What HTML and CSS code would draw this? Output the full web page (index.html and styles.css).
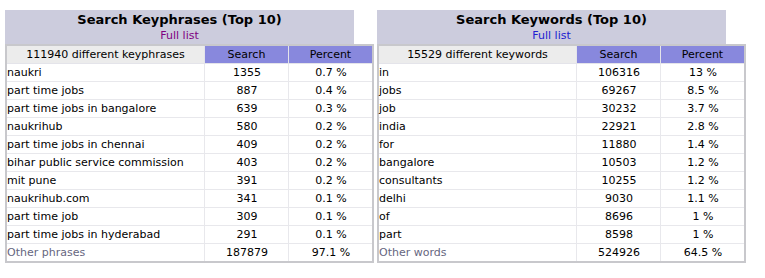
FILE: index.html
```html
<!DOCTYPE html>
<html>
<head>
<meta charset="utf-8">
<link rel="stylesheet" href="styles.css">
</head>
<body>
<div class="wrap">
  <div class="panel">
    <div class="head">
      <div class="title">Search Keyphrases (Top 10)</div>
      <a class="link visited" href="#">Full list</a>
    </div>
    <table class="data">
      <tr><th class="first">111940 different keyphrases</th><th class="col">Search</th><th class="col">Percent</th></tr>
      <tr><td>naukri</td><td>1355</td><td>0.7 %</td></tr>
      <tr><td>part time jobs</td><td>887</td><td>0.4 %</td></tr>
      <tr><td>part time jobs in bangalore</td><td>639</td><td>0.3 %</td></tr>
      <tr><td>naukrihub</td><td>580</td><td>0.2 %</td></tr>
      <tr><td>part time jobs in chennai</td><td>409</td><td>0.2 %</td></tr>
      <tr><td>bihar public service commission</td><td>403</td><td>0.2 %</td></tr>
      <tr><td>mit pune</td><td>391</td><td>0.2 %</td></tr>
      <tr><td>naukrihub.com</td><td>341</td><td>0.1 %</td></tr>
      <tr><td>part time job</td><td>309</td><td>0.1 %</td></tr>
      <tr><td>part time jobs in hyderabad</td><td>291</td><td>0.1 %</td></tr>
      <tr class="other"><td>Other phrases</td><td>187879</td><td>97.1 %</td></tr>
    </table>
  </div>
  <div class="panel">
    <div class="head">
      <div class="title">Search Keywords (Top 10)</div>
      <a class="link" href="#">Full list</a>
    </div>
    <table class="data">
      <tr><th class="first">15529 different keywords</th><th class="col">Search</th><th class="col">Percent</th></tr>
      <tr><td>in</td><td>106316</td><td>13 %</td></tr>
      <tr><td>jobs</td><td>69267</td><td>8.5 %</td></tr>
      <tr><td>job</td><td>30232</td><td>3.7 %</td></tr>
      <tr><td>india</td><td>22921</td><td>2.8 %</td></tr>
      <tr><td>for</td><td>11880</td><td>1.4 %</td></tr>
      <tr><td>bangalore</td><td>10503</td><td>1.2 %</td></tr>
      <tr><td>consultants</td><td>10255</td><td>1.2 %</td></tr>
      <tr><td>delhi</td><td>9030</td><td>1.1 %</td></tr>
      <tr><td>of</td><td>8696</td><td>1 %</td></tr>
      <tr><td>part</td><td>8598</td><td>1 %</td></tr>
      <tr class="other"><td>Other words</td><td>524926</td><td>64.5 %</td></tr>
    </table>
  </div>
</div>
</body>
</html>
```

FILE: styles.css
```css
html, body {
  margin: 0;
  padding: 0;
  background: #ffffff;
}
body {
  font-family: "DejaVu Sans", Verdana, sans-serif;
  font-size: 11px;
  color: #000000;
}
.wrap {
  display: flex;
  gap: 5px;
  padding: 10px 5px 0 5px;
}
.panel {
  width: 367px;
}
.head {
  width: 349px;
  height: 34px;
  background: #ccccdd;
  text-align: center;
  display: flex;
  flex-direction: column;
  align-items: center;
}
.title {
  font-weight: bold;
  font-size: 13px;
  line-height: 16px;
  padding-top: 2px;
}
.link {
  font-size: 11px;
  line-height: 14px;
  margin-top: 1px;
  color: #2020d0;
  text-decoration: none;
}
.link.visited {
  color: #800080;
}
.data {
  width: 367px;
  border-collapse: collapse;
  border: 2px solid #c8c8cc;
  table-layout: fixed;
}
.data th {
  font-weight: normal;
  height: 17px;
  padding: 0;
  text-align: center;
  border: 1px solid #e4e4ea;
}
.data th.first {
  background: #ececec;
  width: 197px;
}
.data th.col {
  background: #8888dd;
  color: #000;
  width: 83px;
}
.data td {
  height: 17px;
  padding: 0 0 0 1px;
  border: 1px solid #e8e8ec;
  text-align: center;
  white-space: nowrap;
}
.data td:first-child {
  text-align: left;
  padding-left: 0;
}
.data tr.other td {
  color: #666680;
}
.data tr.other td + td {
  color: #000;
}
```
